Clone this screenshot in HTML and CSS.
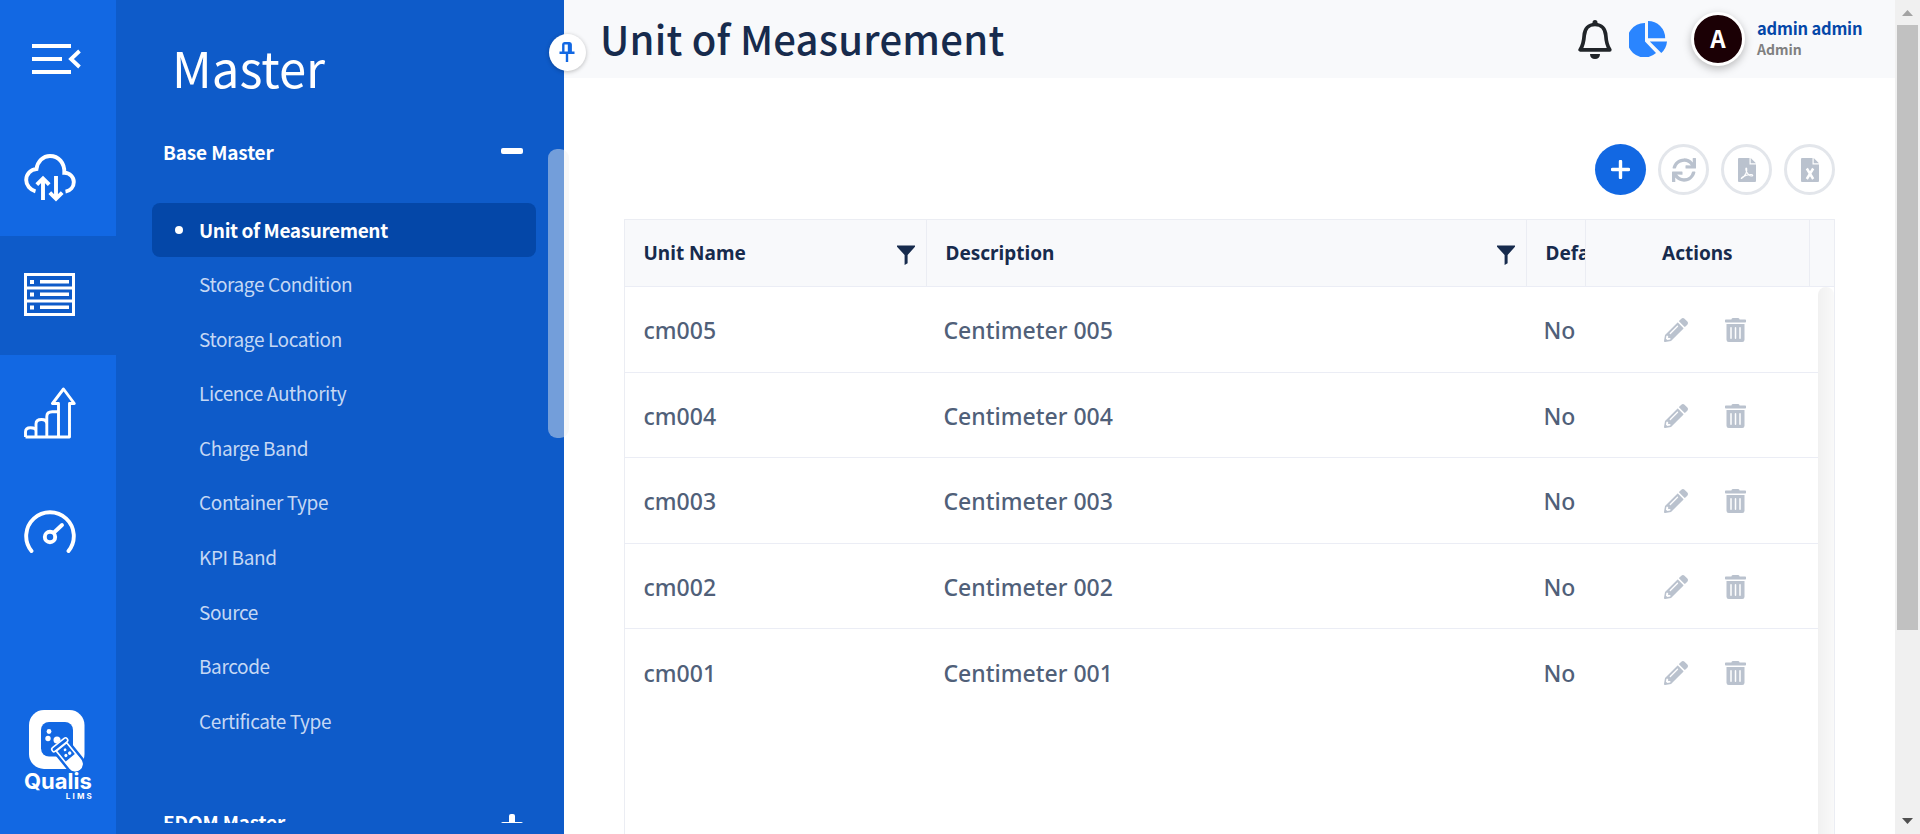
FILE: index.html
```html
<!DOCTYPE html>
<html lang="en">
<head>
<meta charset="utf-8">
<title>Unit of Measurement</title>
<link rel="stylesheet" href="styles.css">
</head>
<body>
<svg class="defs" width="0" height="0">
  <symbol id="pencil" viewBox="0 0 512 512"><path d="M497.900 142.100l-46.100 46.100c-4.700 4.700-12.300 4.700-17 0l-111-111c-4.700-4.700-4.700-12.300 0-17l46.100-46.100c18.700-18.700 49.100-18.700 67.900 0l60.100 60.100c18.800 18.700 18.800 49.100 0 67.900zM284.200 99.800L21.600 362.400.4 483.900c-2.900 16.400 11.400 30.600 27.800 27.800l121.500-21.300 262.600-262.600c4.700-4.700 4.700-12.300 0-17l-111-111c-4.800-4.700-12.400-4.700-17.100 0zM124.100 339.900c-5.500-5.500-5.500-14.300 0-19.800l154-154c5.500-5.500 14.300-5.500 19.800 0s5.500 14.300 0 19.800l-154 154c-5.500 5.500-14.300 5.500-19.800 0zM88 424h48v36.300l-64.500 11.300-31.100-31.100L51.700 376H88v48z"/></symbol>
  <symbol id="trash" viewBox="0 0 448 512"><path d="M32 464a48 48 0 0 0 48 48h288a48 48 0 0 0 48-48V128H32zm272-256a16 16 0 0 1 32 0v224a16 16 0 0 1-32 0zm-96 0a16 16 0 0 1 32 0v224a16 16 0 0 1-32 0zm-96 0a16 16 0 0 1 32 0v224a16 16 0 0 1-32 0zM432 32H312l-9.400-18.700A24 24 0 0 0 281.100 0H166.800a23.700 23.700 0 0 0-21.400 13.300L136 32H16A16 16 0 0 0 0 48v32a16 16 0 0 0 16 16h416a16 16 0 0 0 16-16V48a16 16 0 0 0-16-16z"/></symbol>
  <symbol id="funnel" viewBox="0 0 18 20"><path d="M0 .5h18v1.300L10.600 10v8.300L7.600 20V10L0 1.800z"/></symbol>
</svg>
<div class="app">
  <nav class="rail">
    <a class="rail-item menu"><svg width="50" height="32" viewBox="0 0 50 32"><g stroke="#fff" stroke-width="3.800" fill="none"><path d="M1 3h39M1 16h30M1 29h39"/><path d="M48.500 8L40 16l8.500 8"/></g></svg></a>
    <a class="rail-item cloud"><svg width="52" height="48" viewBox="0 0 52 48"><g stroke="#fff" stroke-width="3.900" fill="none"><path d="M11.500 37.300C6 35.800 2.200 31 2.200 26c0-6 4.600-10.600 10.300-11C13.500 7.500 19 2 26 2c8.500 0 14.800 6.800 14.300 16.800C46 19 49.800 23 49.800 28c0 4.800-3.300 8.800-8.300 9.600"/><path d="M19 46V25M12.800 30.600L19 24.400l6.200 6.200M32 22v22M25.800 38.600L32 44.800l6.200-6.200"/></g></svg></a>
    <a class="rail-item active"><svg width="52" height="44" viewBox="0 0 52 44"><g fill="none" stroke="#fff" stroke-width="3"><path d="M1.500 1.500h48v40h-48zM1.500 15h48M1.500 28h48"/></g><g fill="#fff"><path d="M6 7h4v4H6zM16 7h29v3.500H16zM6 19.500h4v4H6zM16 19.500h29V23H16zM6 32.500h4v4H6zM16 32.500h29V36H16z"/></g></svg></a>
    <a class="rail-item chart"><svg width="52" height="52" viewBox="0 0 52 52"><g fill="none" stroke="#fff" stroke-width="2.900" stroke-linejoin="round"><path d="M1.500 50V45c0-3 1.500-4.300 5-4.300s5.500.5 5.500 3.300v6M12 50V37c0-3 2-4.500 5.500-4.500s5.300 1.500 5.300 4.500v13M22.800 50V29.500c0-3 2-4.700 5.500-4.700h6.200M1.500 50h44V16.500h4.800L39.500 2 28.500 16.500h6V50"/></g></svg></a>
    <a class="rail-item gauge"><svg width="52" height="44" viewBox="0 0 52 44"><g fill="none" stroke="#fff" stroke-width="3.900" stroke-linecap="round"><path d="M7.500 41A23.800 23.800 0 1 1 44.500 41"/><circle cx="26" cy="27" r="5.200"/><path d="M30 22.500l8-7.500"/></g></svg></a>
    <div class="logo">
      <svg width="56" height="64" viewBox="0 0 56 64"><rect width="55.500" height="59" rx="15" fill="#fff"/><rect x="12" y="12" width="32" height="34.500" rx="8" fill="#1268e3"/><g fill="#fff"><circle cx="20" cy="21.500" r="2.400"/><circle cx="19" cy="28.500" r="2.700"/><circle cx="28" cy="30" r="3.500"/></g><g transform="rotate(-39 35 40)"><path d="M27.500 33h15v25a7.500 7.500 0 0 1-15 0z" fill="#fff" stroke="#1268e3" stroke-width="5"/><rect x="25.500" y="31" width="19" height="4.500" rx="2" fill="#1268e3" stroke="#fff" stroke-width="1.600"/><path d="M28.300 36h13.400v22a6.700 6.700 0 0 1-13.400 0z" fill="#1268e3" stroke="#fff" stroke-width="1.600"/><path d="M28 50h14v8a7 7 0 0 1-14 0z" fill="#fff"/><circle cx="33" cy="45.500" r="1.600" fill="#fff"/><circle cx="37.500" cy="46" r="1.700" fill="#fff"/><circle cx="36" cy="40.500" r="1.400" fill="#fff"/></g></svg>
      <b class="logo-name">Qualis</b><span class="logo-sub">LIMS</span>
    </div>
  </nav>
  <aside class="panel">
    <button class="pin"><svg width="16" height="20" viewBox="0 0 16 20"><path d="M4.300 10V2.500c0-.8.500-1.300 1.200-1.300h5c.700 0 1.200.5 1.200 1.300V10M.5 10.800h15M8 11v9" fill="none" stroke="#1268e3" stroke-width="2.400"/><path d="M8.800 1h3.200v9H8.800z" fill="#1268e3"/></svg></button>
    <h2 class="panel-title">Master</h2>
    <div class="panel-body">
      <div class="group"><span>Base Master</span><i class="minus"></i></div>
      <ul class="items">
        <li class="current"><span>Unit of Measurement</span></li>
        <li>Storage Condition</li><li>Storage Location</li><li>Licence Authority</li><li>Charge Band</li><li>Container Type</li><li>KPI Band</li><li>Source</li><li>Barcode</li><li>Certificate Type</li>
      </ul>
      <div class="group second"><span>EDQM Master</span><i class="minus plus"></i></div>
    </div>
    <div class="panel-thumb"></div>
  </aside>
  <main class="main">
    <header class="top">
      <h1>Unit of Measurement</h1>
      <svg class="bell" width="34" height="40" viewBox="0 0 34 40"><path d="M17 4.500c-6.500 0-10.300 4.600-10.800 11C5.800 22 5 25.500 2.200 29.800h29.600C29 25.500 28.200 22 27.800 15.500 27.300 9.100 23.500 4.500 17 4.500z" fill="none" stroke="#212529" stroke-width="3.700" stroke-linejoin="round"/><path d="M14.500 5V2.500a2.500 2.500 0 0 1 5 0V5zM12 34h10c0 3.300-2 5-5 5s-5-1.700-5-5z" fill="#212529"/></svg>
      <svg class="pie" width="38" height="36" viewBox="0 0 38 36" fill="#2a85ff"><path d="M16 2v18.500L27 32A17.200 17.200 0 1 1 16 2zM19 0a17.200 17.200 0 0 1 17.200 17.200H19zM20.800 20.500H38A17.500 17.500 0 0 1 32.300 32z"/></svg>
      <div class="avatar">A</div>
      <div class="user"><b>admin admin</b><span>Admin</span></div>
    </header>
    <section class="content">
      <div class="tools">
        <button class="tool primary"><svg width="19" height="19" viewBox="0 0 19 19"><path d="M9.500 1.500v16M1.500 9.500h16" stroke="#fff" stroke-width="3.400" stroke-linecap="round"/></svg></button>
        <button class="tool"><svg width="24" height="24" viewBox="0 0 512 512"><path fill="#bac2ce" d="M440.650 12.570l4 82.770A247.160 247.160 0 0 0 255.830 8C134.730 8 33.910 94.920 12.290 209.820A12 12 0 0 0 24.090 224h49.050a12 12 0 0 0 11.670-9.260 175.910 175.910 0 0 1 317-56.940l-101.460-4.860a12 12 0 0 0-12.570 12v47.410a12 12 0 0 0 12 12H500a12 12 0 0 0 12-12V12a12 12 0 0 0-12-12h-47.370a12 12 0 0 0-11.980 12.570zM255.830 432a175.610 175.610 0 0 1-146-77.800l101.800 4.870a12 12 0 0 0 12.570-12v-47.400a12 12 0 0 0-12-12H12a12 12 0 0 0-12 12V500a12 12 0 0 0 12 12h47.350a12 12 0 0 0 12-12.600l-4.150-82.570A247.170 247.170 0 0 0 255.830 504c121.110 0 221.930-86.920 243.550-201.820a12 12 0 0 0-11.800-14.180h-49.050a12 12 0 0 0-11.670 9.260A175.860 175.860 0 0 1 255.830 432z"/></svg></button>
        <button class="tool"><svg width="18" height="24" viewBox="0 0 18 24"><path fill="#bac2ce" d="M1 0h10.500v6.500H18V23q0 1-1 1H1q-1 0-1-1V1q0-1 1-1zM12.700 0L18 5.300h-5.300z"/><path d="M3.500 20.500C7 18.500 9.500 13.500 8.700 10.500c-.8-1.500-1.200.5-.5 2.500 1 3 3.800 5 5.300 5 2 0 1.500-1.700-.8-1.500-3 .2-5.700 1-7.700 2.200-1.500 1-2 2-1.500 1.800z" fill="none" stroke="#fff" stroke-width="1.100"/></svg></button>
        <button class="tool"><svg width="18" height="24" viewBox="0 0 18 24"><path fill="#bac2ce" d="M1 0h10.500v6.500H18V23q0 1-1 1H1q-1 0-1-1V1q0-1 1-1zM12.700 0L18 5.300h-5.300z"/><path d="M5.800 10.500l6.400 10.500M12.200 10.500L5.800 21" stroke="#fff" stroke-width="2.500"/></svg></button>
      </div>
      <div class="grid">
        <div class="row head">
          <div class="cell"><span>Unit Name</span><svg class="f" width="18" height="20"><use href="#funnel"/></svg></div>
          <div class="cell"><span>Description</span><svg class="f" width="18" height="20"><use href="#funnel"/></svg></div>
          <div class="cell"><span>Default</span></div>
          <div class="cell act"><span>Actions</span></div>
          <div class="cell"></div>
        </div>
        <div class="body">
          <div class="rows">
            <div class="row"><div class="cell">cm005</div><div class="cell">Centimeter 005</div><div class="cell">No</div><div class="cell icons"><svg width="24" height="24"><use href="#pencil"/></svg><svg width="21" height="24"><use href="#trash"/></svg></div></div>
            <div class="row"><div class="cell">cm004</div><div class="cell">Centimeter 004</div><div class="cell">No</div><div class="cell icons"><svg width="24" height="24"><use href="#pencil"/></svg><svg width="21" height="24"><use href="#trash"/></svg></div></div>
            <div class="row"><div class="cell">cm003</div><div class="cell">Centimeter 003</div><div class="cell">No</div><div class="cell icons"><svg width="24" height="24"><use href="#pencil"/></svg><svg width="21" height="24"><use href="#trash"/></svg></div></div>
            <div class="row"><div class="cell">cm002</div><div class="cell">Centimeter 002</div><div class="cell">No</div><div class="cell icons"><svg width="24" height="24"><use href="#pencil"/></svg><svg width="21" height="24"><use href="#trash"/></svg></div></div>
            <div class="row"><div class="cell">cm001</div><div class="cell">Centimeter 001</div><div class="cell">No</div><div class="cell icons"><svg width="24" height="24"><use href="#pencil"/></svg><svg width="21" height="24"><use href="#trash"/></svg></div></div>
          </div>
          <div class="track"></div>
        </div>
      </div>
    </section>
  </main>
  <div class="scrollbar">
    <svg class="up" width="11" height="6"><path d="M0 6L5.500 0 11 6z" fill="#a3a3a3"/></svg>
    <div class="thumb"></div>
    <svg class="down" width="11" height="6"><path d="M0 0L5.500 6 11 0z" fill="#505050"/></svg>
  </div>
</div>
</body>
</html>
```
FILE: styles.css
```css
* { box-sizing: border-box; }
body { margin: 0; overflow: hidden; font-family: "Noto Sans CJK JP", "Noto Sans", sans-serif; background: #fff; }
.defs { position: absolute; }
button { padding: 0; border: 0; }
svg { display: block; flex: none; }
.app { display: flex; height: 834px; }

.rail { width: 116px; flex: none; background: #1268e3; display: flex; flex-direction: column; }
.rail-item { height: 119px; flex: none; display: flex; align-items: center; padding-left: 24px; }
.rail-item.menu { height: 117px; padding-left: 31px; }
.rail-item.active { background: #0e5bc9; }
.rail-item.cloud { padding-top: 2px; }
.rail-item.active svg { margin-top: -1px; }
.rail-item.chart { padding-bottom: 3px; }
.rail-item.gauge { padding-bottom: 4px; }
.logo { margin-top: 117px; display: flex; flex-direction: column; width: 70px; margin-left: 24px; color: #fff; }
.logo svg { margin-left: 5px; }
.logo-name { font: bold 22px/16px "Inter", sans-serif; letter-spacing: 0; margin-top: -1px; }
.logo-sub { font: bold 8px/8px "Inter", sans-serif; letter-spacing: 2.200px; text-align: right; margin-top: 3px; }

.panel { position: relative; width: 448px; flex: none; background: #0e5bc9; color: #fff; display: flex; flex-direction: column; }
.panel-title { margin: 29px 0 0 56px; font-size: 49px; line-height: 76px; font-weight: 400; }
.panel-body { height: 718px; overflow: hidden; padding: 26px 28px 0 36px; }
.group { display: flex; align-items: center; justify-content: space-between; height: 40px; padding: 0 13px 0 11px; font-size: 19px; letter-spacing: -.15px; font-weight: 700; }
.minus { display: block; width: 22px; height: 6px; border-radius: 2px; background: #fff; }
.plus { position: relative; margin-top: 8px; }
.plus::after { content: ""; position: absolute; left: 8px; top: -8px; width: 6px; height: 22px; border-radius: 2px; background: #fff; }
.items { list-style: none; margin: 32px 0 0; padding: 0; font-size: 19px; letter-spacing: -.38px; }
.items li { height: 54.600px; line-height: 54.600px; padding-left: 47px; color: #c5d8f4; }
.items li.current { height: 54px; color: #fff; font-weight: 700; background: #0447a8; border-radius: 8px; padding-left: 23px; display: flex; align-items: center; }
.current::before { content: ""; width: 8px; height: 8px; border-radius: 50%; background: #fff; margin-right: 16px; }
.second { margin-top: 53px; }
.pin { position: absolute; z-index: 3; left: 433px; top: 34px; width: 37px; height: 37px; border-radius: 50%; background: #fff; box-shadow: 0 1px 4px rgba(0,0,0,.25); display: flex; align-items: center; justify-content: center; padding: 0 2px 2px 0; }
.panel-thumb { position: absolute; z-index: 2; left: 432px; top: 149px; width: 21px; height: 289px; border-radius: 9px; background: rgba(240,240,240,.45); }

.main { flex: 1; min-width: 0; }
.top { height: 78px; background: #f8f9fb; display: flex; align-items: center; padding: 0 34px 0 36px; }
.top h1 { margin: -2px auto 0 0; font-size: 40px; line-height: 60px; font-weight: 500; letter-spacing: .24px; color: #172b4d; }
.bell { margin-top: 1px; }
.pie { margin-left: 17px; }
.avatar { margin-left: 24px; width: 54px; height: 54px; border-radius: 50%; border: 3px solid #fff; background: #1b0005; color: #fff; font-size: 24px; line-height: 46px; padding-bottom: 2px; font-weight: 700; display: flex; align-items: center; justify-content: center; box-shadow: 0 3px 9px rgba(0,0,0,.25); }
.user { margin: -2px 0 0 12px; width: 104px; display: flex; flex-direction: column; white-space: nowrap; }
.user b { font-size: 16.500px; line-height: 22px; letter-spacing: -.2px; color: #0447a8; }
.user span { font-size: 14px; line-height: 20px; font-weight: 700; color: #808080; }

.content { padding: 66px 60px 0; }
.tools { display: flex; justify-content: flex-end; gap: 12px; }
.tool { width: 51px; height: 51px; border-radius: 50%; border: 3px solid #e3e6eb; background: #fff; display: flex; align-items: center; justify-content: center; }
.tool.primary { background: #1268e3; border: 0; }
.grid { margin-top: 24px; border: 1px solid #ebedf3; border-bottom: 0; height: 615px; overflow: hidden; font-family: "Noto Sans", sans-serif; }
.row { display: grid; grid-template-columns: 300px 600px 58px 1fr; height: 85.500px; border-bottom: 1px solid #ebedf5; }
.cell { display: flex; align-items: center; padding: 2px 0 0 18.500px; min-width: 0; overflow: hidden; white-space: nowrap; font-size: 23px; font-weight: 500; color: #506079; }
.head { grid-template-columns: 302px 600px 59px 224px 1fr; height: 67px; background: #f8f9fb; }
.head .cell { padding-top: 0; font-size: 19px; font-weight: 700; color: #172b4d; border-right: 1px solid #ebedf3; }
.head .cell:last-child { border: 0; }
.head .act { padding-left: 76px; }
.f { margin: 3px 11px 0 auto; fill: #172b4d; }
.body { display: flex; height: 548px; }
.rows { flex: 1; }
.rows .row:last-child { border: 0; }
.icons { padding-left: 81px; gap: 37px; fill: #bac2ce; overflow: visible; }
.track { width: 16px; border-radius: 8px 8px 0 0; background: linear-gradient(90deg, #f1f1f1, #f9f9f9); }

.scrollbar { width: 25px; flex: none; background: #f0f0f0; display: flex; flex-direction: column; align-items: center; }
.up { margin: 10px 0 9px; }
.thumb { width: 21px; height: 605px; background: #c1c1c1; }
.down { margin: auto 0 10px; }
```
